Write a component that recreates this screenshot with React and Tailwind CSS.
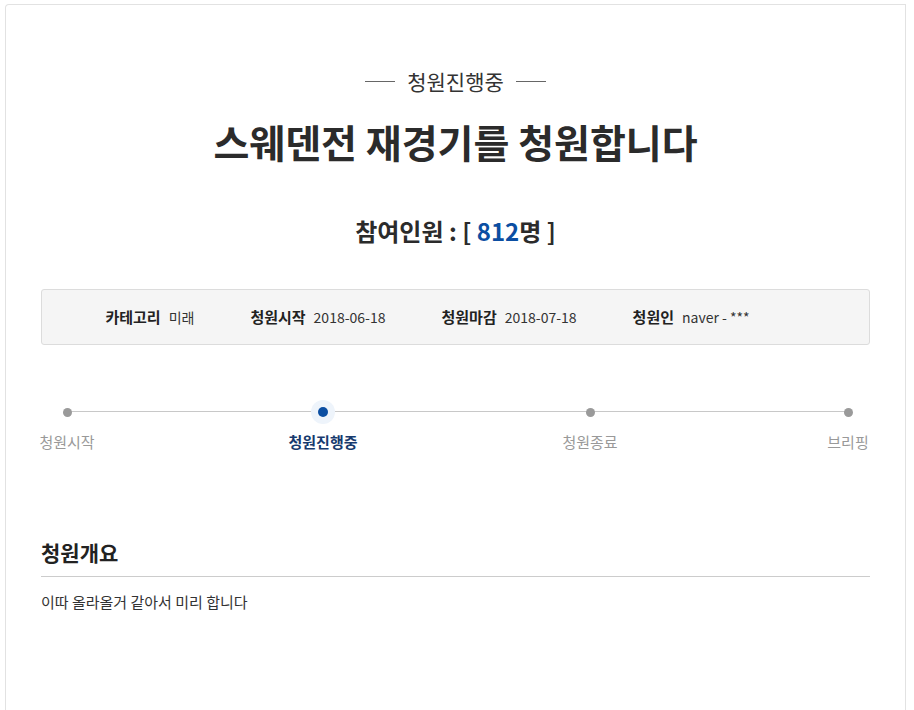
import React from "react";

const FONT = { fontFamily: '"Noto Sans CJK KR", "Noto Sans", sans-serif' };

const infoItems = [
  { label: "카테고리", value: "미래" },
  { label: "청원시작", value: "2018-06-18" },
  { label: "청원마감", value: "2018-07-18" },
  { label: "청원인", value: "naver - ***" },
];

const steps = [
  { name: "청원시작", active: false, offset: "" },
  { name: "청원진행중", active: true, offset: "ml-[256px]" },
  { name: "청원종료", active: false, offset: "ml-[267px]" },
  { name: "브리핑", active: false, offset: "ml-auto" },
];

const App = () => {
  return (
    <div className="min-h-screen bg-white pt-[4px] pl-[5px] pr-[8px]" style={FONT}>
      <div className="min-h-[706px] border-l border-t border-r border-[#e2e2e2] rounded-tl-[4px] px-[35px]">
        {/* Status heading */}
        <div className="flex items-center justify-center gap-[12px] pt-[62px]">
          <span className="w-[30px] h-px bg-[#666]" />
          <span className="text-[21px] leading-[28px] text-[#333]">청원진행중</span>
          <span className="w-[30px] h-px bg-[#666]" />
        </div>

        <h1 className="mt-[19px] text-center text-[39px] leading-[54px] font-bold text-[#2b2b2b]">
          스웨덴전 재경기를 청원합니다
        </h1>

        <p className="mt-[45px] text-center text-[24px] leading-[36px] font-bold text-[#2b2b2b]">
          참여인원 : [ <span className="text-[#0b4ea2]">812</span>명 ]
        </p>

        {/* Info box */}
        <div className="mt-[40px] h-[56px] bg-[#f5f5f5] border border-[#dcdcdc] rounded-[3px] flex items-center justify-center text-[#333]">
          {infoItems.map((item) => (
            <div key={item.label} className="flex items-center gap-[8px] pr-[56px]">
              <span className="text-[15px] font-bold text-[#222]">{item.label}</span>
              <span className="text-[14px]">{item.value}</span>
            </div>
          ))}
        </div>

        {/* Progress */}
        <div className="mt-[55px] relative pl-[26px] pr-[22px]">
          <div className="absolute left-[26px] right-[22px] top-[11px] h-px bg-[#c8c8c8]" />
          <div className="relative flex">
            {steps.map((step) => (
              <div key={step.name} className={`w-0 flex flex-col items-center ${step.offset}`}>
                <div className="h-[24px] w-[24px] flex items-center justify-center">
                  {step.active ? (
                    <span className="h-[24px] w-[24px] rounded-full bg-[#eef4fb] flex items-center justify-center">
                      <span className="h-[10px] w-[10px] rounded-full bg-[#0b4ea2]" />
                    </span>
                  ) : (
                    <span className="h-[9px] w-[9px] rounded-full bg-[#9a9a9a]" />
                  )}
                </div>
                <span
                  className={
                    step.active
                      ? "mt-[7px] whitespace-nowrap text-[15px] leading-[22px] font-bold text-[#173a6e]"
                      : "mt-[7px] whitespace-nowrap text-[15px] leading-[22px] text-[#999]"
                  }
                >
                  {step.name}
                </span>
              </div>
            ))}
          </div>
        </div>

        {/* Summary */}
        <h2 className="mt-[84px] text-[21px] leading-[30px] font-bold text-[#222]">청원개요</h2>
        <div className="mt-[9px] h-px bg-[#cccccc]" />
        <p className="mt-[14px] text-[15px] leading-[22px] text-[#333]">
          이따 올라올거 같아서 미리 합니다
        </p>
      </div>
    </div>
  );
};

export default App;
